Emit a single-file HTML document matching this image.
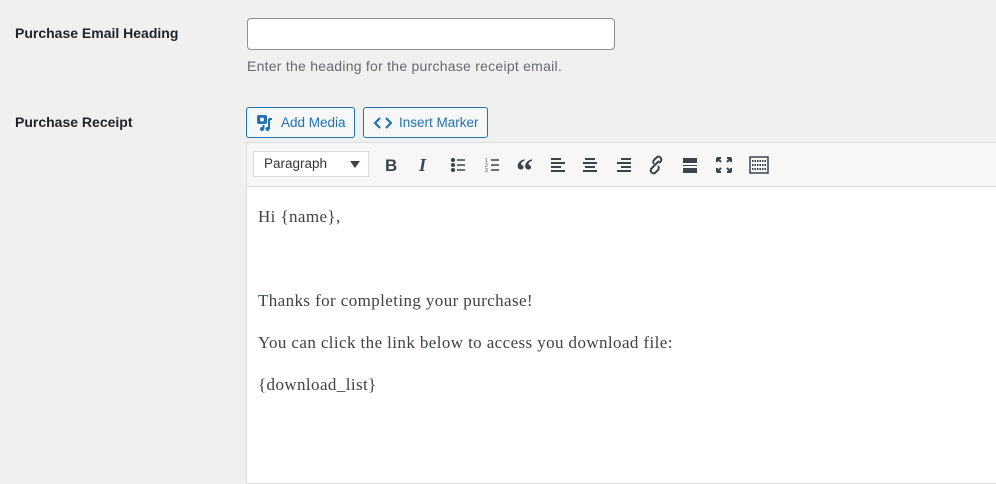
<!DOCTYPE html><html><head><style>
body{margin:0;width:996px;height:471px;background:#f0f0f1;font-family:"Liberation Sans",sans-serif;position:relative;overflow:hidden;color:#1d2327}
.lbl{position:absolute;left:15px;font-size:14px;font-weight:bold}
.inp{position:absolute;left:247px;top:18px;width:366px;height:30px;border:1px solid #8c8f94;border-radius:4px;background:#fff}
.desc{position:absolute;left:247px;top:58px;font-size:14px;color:#646970;letter-spacing:0.25px}
.btn{position:absolute;top:107px;border:1px solid #2271b1;border-radius:3px;background:#f6f7f7;color:#2271b1;font-size:13.5px;line-height:29px;box-sizing:border-box;height:31px}
.ed{position:absolute;left:246px;top:142px;width:760px;height:340px;border:1px solid #dcdcde;background:#fff}
.tb{height:43px;background:#f6f7f7;border-bottom:1px solid #dcdcde;position:relative}
.sel{position:absolute;left:6px;top:8px;width:116px;height:26px;border:1px solid #dcdcde;background:#fff;font-size:13.5px;line-height:24px;color:#32373c;box-sizing:border-box;padding-left:10px}
.c{font-family:"Liberation Serif",serif;font-size:17px;letter-spacing:0.4px;color:#3c434a;position:absolute;left:11px}
</style></head><body>
<div class="lbl" style="top:25px">Purchase Email Heading</div>
<div class="inp"></div>
<div class="desc">Enter the heading for the purchase receipt email.</div>
<div class="lbl" style="top:114px">Purchase Receipt</div>
<div class="btn" style="left:246px;width:109px;padding-left:34px">Add Media
<svg style="position:absolute;left:9px;top:6px" width="18" height="18" viewBox="0 0 18 18"><rect x="1" y="1" width="10" height="9" rx="2" fill="#2271b1"/><circle cx="6" cy="5.5" r="2" fill="#f6f7f7"/><path d="M13 5v10M13 5h3" stroke="#2271b1" stroke-width="2" fill="none"/><circle cx="11.5" cy="15" r="2" fill="#2271b1"/><circle cx="6" cy="15" r="2" fill="#2271b1"/><path d="M7.5 15V11" stroke="#2271b1" stroke-width="2"/></svg></div>
<div class="btn" style="left:363px;width:125px;padding-left:35px">Insert Marker
<svg style="position:absolute;left:10px;top:8px" width="18" height="14" viewBox="0 0 18 14"><path d="M6 2L1 7l5 5M12 2l5 5-5 5" stroke="#2271b1" stroke-width="2.2" fill="none"/></svg></div>
<div class="ed"><div class="tb">
<div class="sel">Paragraph<span style="position:absolute;right:8px;top:9px;border:5px solid transparent;border-top:7px solid #3c434a;border-bottom:0"></span></div>
<svg style="position:absolute;left:130px;top:12px" width="400" height="20" viewBox="0 0 400 20" fill="#3c434a" stroke="#3c434a">
<text x="8" y="16" font-family="Liberation Sans" font-weight="bold" font-size="17" stroke="none">B</text>
<text x="42" y="16" font-family="Liberation Serif" font-style="italic" font-weight="bold" font-size="18" stroke="none">I</text>
<g stroke-width="1.5"><circle cx="76" cy="5" r="1.3"/><circle cx="76" cy="10" r="1.3"/><circle cx="76" cy="15" r="1.3"/><path d="M80 5h8M80 10h8M80 15h8"/></g>
<g stroke-width="1.5"><path d="M114 5h8M114 10h8M114 15h8"/></g><text x="108" y="7" font-size="5" stroke="none">1</text><text x="108" y="12" font-size="5" stroke="none">2</text><text x="108" y="17" font-size="5" stroke="none">3</text>
<text x="139" y="27" font-family="Liberation Serif" font-weight="bold" font-size="34" stroke="none">“</text>
<g stroke-width="2"><path d="M174 4h10M174 8h14M174 12h10M174 16h14"/><path d="M208 4h10M206 8h14M208 12h10M206 16h14"/><path d="M244 4h10M240 8h14M244 12h10M240 16h14"/></g>
<path d="M276 12l-2 2a3 3 0 0 0 4 4l3-3a3 3 0 0 0 0-4M282 8l2-2a3 3 0 0 0-4-4l-3 3a3 3 0 0 0 0 4M275 13l7-7" stroke-width="2" fill="none"/>
<rect x="306" y="3" width="14" height="5" stroke="none"/><rect x="306" y="13" width="14" height="5" stroke="none"/><path d="M306 10.5h14" stroke-width="1"/>
<path d="M340 3l4 4M354 3l-4 4M340 17l4-4M354 17l-4-4M340 3h4M340 3v4M354 3h-4M354 3v4M340 17h4M340 17v-4M354 17h-4M354 17v-4" stroke-width="2" fill="none"/>
<rect x="373" y="2" width="18" height="16" fill="none" stroke-width="1.5"/><path d="M375 6h14M375 10h14M375 14h14" stroke-width="2" stroke-dasharray="1.5 1"/>
</svg></div>
<div class="c" style="top:64px">Hi {name},</div>
<div class="c" style="top:148px">Thanks for completing your purchase!</div>
<div class="c" style="top:190px">You can click the link below to access you download file:</div>
<div class="c" style="top:232px">{download_list}</div>
</div>
</body></html>
